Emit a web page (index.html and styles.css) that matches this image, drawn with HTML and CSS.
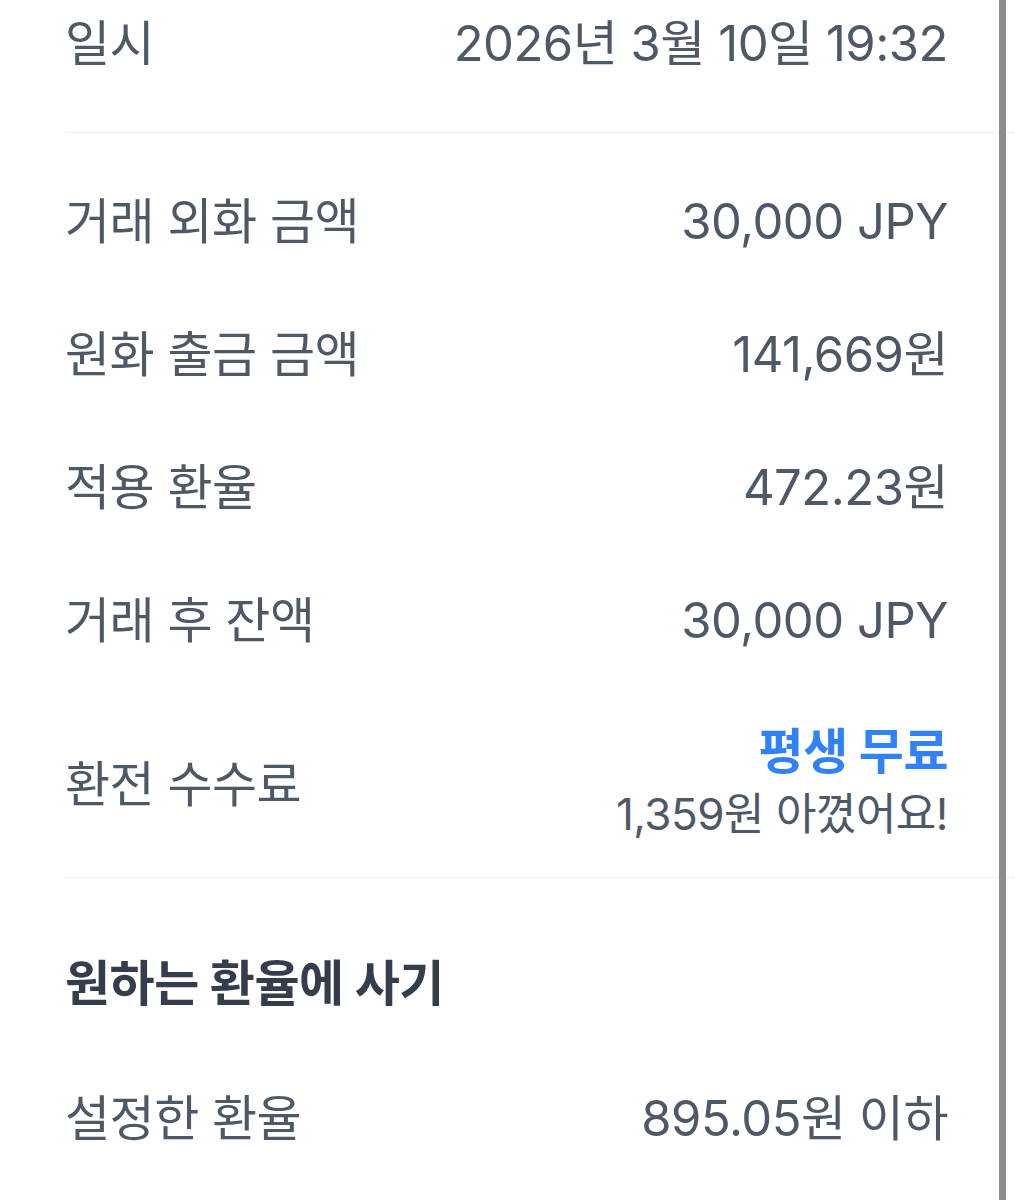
FILE: index.html
```html
<!DOCTYPE html>
<html lang="ko">
<head>
<meta charset="utf-8">
<title>환전 상세</title>
<link rel="stylesheet" href="styles.css">
</head>
<body>
<div class="page">
    <div class="section first">
        <div class="row">
            <span class="label">일시</span>
            <span class="value">2026년 3월 10일 19:32</span>
        </div>
    </div>
    <div class="section">
        <div class="row">
            <span class="label">거래 외화 금액</span>
            <span class="value">30,000 JPY</span>
        </div>
        <div class="row">
            <span class="label">원화 출금 금액</span>
            <span class="value">141,669원</span>
        </div>
        <div class="row">
            <span class="label">적용 환율</span>
            <span class="value">472.23원</span>
        </div>
        <div class="row">
            <span class="label">거래 후 잔액</span>
            <span class="value">30,000 JPY</span>
        </div>
        <div class="row fee">
            <span class="label">환전 수수료</span>
            <div class="value">
                <p class="free">평생 무료</p>
                <p class="saved">1,359원 아꼈어요!</p>
            </div>
        </div>
    </div>
    <div class="section last">
        <h2 class="title">원하는 환율에 사기</h2>
        <div class="row">
            <span class="label">설정한 환율</span>
            <span class="value">895.05원 이하</span>
        </div>
    </div>
</div>
<div class="scrollbar"></div>
</body>
</html>
```

FILE: styles.css
```css
* { margin: 0; padding: 0; }
body { background: #fff; font-family: "Inter", "Noto Sans CJK KR", sans-serif; color: #4e5968; font-size: 49px; letter-spacing: -0.5px; }
.page { padding-left: 65px; }
.section { display: flex; flex-direction: column; gap: 73px; padding: 59px 0 31px; border-bottom: 1px solid #eceef0; }
.section.first { padding: 14px 0 58px; }
.section.last { border-bottom: 0; gap: 75px; padding-top: 76px; }
.row { display: flex; justify-content: space-between; align-items: center; padding-right: 67px; line-height: 60px; }
.value { text-align: right; }
.fee .value p { line-height: 63px; }
.fee .value { margin-top: -4px; }
.free { color: #3182f6; font-weight: 700; }
.saved { font-size: 44px; }
.title { font-size: 49px; line-height: 60px; font-weight: 700; color: #333d4b; }
.scrollbar { position: fixed; top: 0; right: 9px; width: 7px; height: 100%; background: #8b8b8b; }
```
